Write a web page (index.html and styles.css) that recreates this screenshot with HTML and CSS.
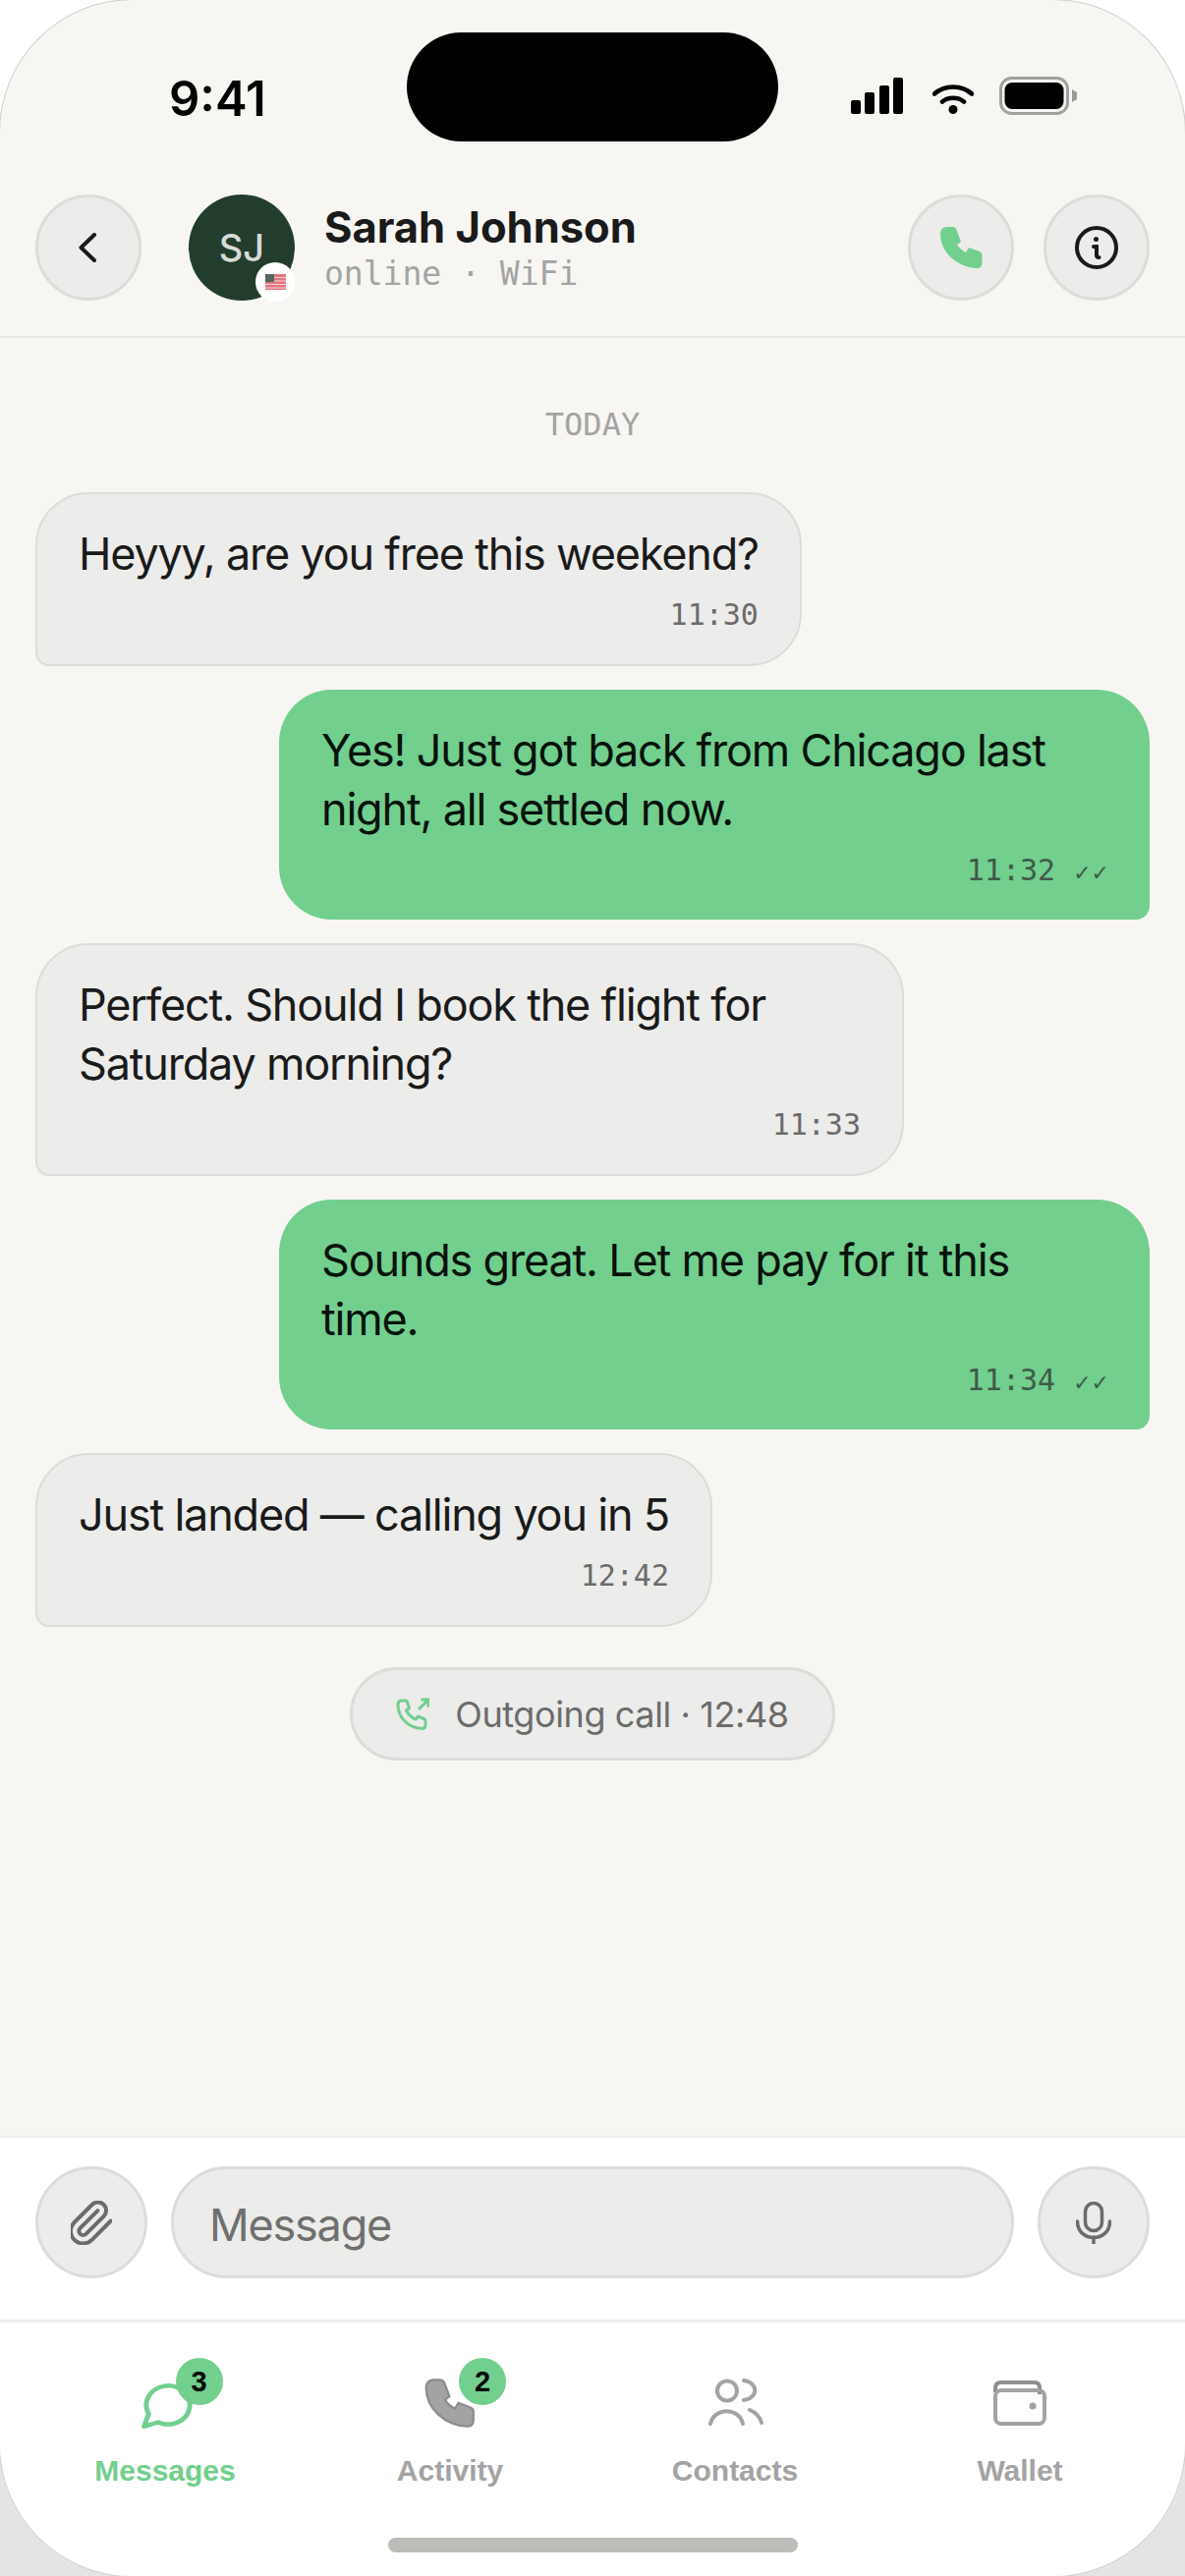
FILE: index.html
```html
<!DOCTYPE html>
<html lang="en">
<head>
    <meta charset="UTF-8">
    <meta name="viewport" content="width=device-width, initial-scale=1.0"/>
    <title>Chat</title>
    <link rel="stylesheet" href="styles.css">
</head>
<body>
    <div class="phone">
        <div class="island"></div>
        <div class="status">
            <span class="clock">9:41</span>
            <div class="status-icons">
                <svg class="ic-signal" viewBox="0 0 53 37"><rect x="0" y="23" width="10" height="14" rx="2"/><rect x="14" y="15" width="10" height="22" rx="2"/><rect x="29" y="8" width="10" height="29" rx="2"/><rect x="43" y="0" width="10" height="37" rx="2"/></svg>
                <svg class="ic-wifi" viewBox="0 0 42 32"><path d="M2 11.500C12 2 30 2 40 11.500M10 19.500C16 14.500 26 14.500 32 19.500" fill="none" stroke="#000" stroke-width="4.500" stroke-linecap="round"/><circle cx="21" cy="27.500" r="4.500"/></svg>
                <svg class="ic-battery" viewBox="0 0 80 39"><rect x="1.500" y="1.500" width="68" height="36" rx="11" fill="none" stroke="#a0a0a0" stroke-width="3"/><rect x="5.500" y="6" width="60" height="27" rx="7.500"/><path d="M74 13l5 3v7l-5 3z" fill="#999"/></svg>
            </div>
        </div>

        <div class="header">
            <button class="round"><svg class="ic-back" viewBox="0 0 18 30"><path d="M16 2L2.500 15L16 28" fill="none" stroke="#1a1a1a" stroke-width="4" stroke-linecap="round" stroke-linejoin="round"/></svg></button>
            <div class="avatar">
                SJ
                <span class="flag-badge"><svg class="ic-flag" viewBox="0 0 21 16"><rect width="21" height="16" fill="#e4747e"/><path d="M0 3.500H21M0 7H21M0 10.500H21M0 14H21" stroke="#f3d5d5" stroke-width="1.200"/><rect width="9" height="8" fill="#55685c"/></svg></span>
            </div>
            <div class="who">
                <div class="name">Sarah Johnson</div>
                <div class="presence">online · WiFi</div>
            </div>
            <button class="round"><svg class="ic-call" viewBox="0 0 43 42"><path class="handset" d="M0 7Q0 1 6 0L13 0Q15 0 16 2L21 15L17 18Q20 23 26 26L29 21L40 25Q42.500 26 42.500 29L42.500 37Q42 42 37 42C17 41 0 26 0 7Z"/></svg></button>
            <button class="round"><svg class="ic-info" viewBox="0 0 44 44"><circle cx="22" cy="22" r="20" fill="none" stroke="#1a1a1a" stroke-width="4"/><circle cx="21.500" cy="13.500" r="2.500" fill="#1a1a1a"/><path d="M19 21H22V30Q22 32 24.500 32" fill="none" stroke="#1a1a1a" stroke-width="4" stroke-linecap="round"/></svg></button>
        </div>

        <div class="messages">
            <div class="day">TODAY</div>

            <div class="bubble in">
                <div class="text">Heyyy, are you free this weekend?</div>
                <div class="meta">11:30</div>
            </div>
            <div class="bubble out">
                <div class="text">Yes! Just got back from Chicago last night, all settled now.</div>
                <div class="meta">11:32<span class="checks">✓✓</span></div>
            </div>
            <div class="bubble in">
                <div class="text">Perfect. Should I book the flight for Saturday morning?</div>
                <div class="meta">11:33</div>
            </div>
            <div class="bubble out">
                <div class="text">Sounds great. Let me pay for it this time.</div>
                <div class="meta">11:34<span class="checks">✓✓</span></div>
            </div>
            <div class="bubble in">
                <div class="text">Just landed — calling you in 5</div>
                <div class="meta">12:42</div>
            </div>

            <div class="call-pill">
                <svg class="ic-outgoing" viewBox="0 0 34 33"><path d="M2 7Q2 3 6 3L9.500 3Q11 3 11.500 4.500L13.500 10.500L10.500 13Q13.500 19 20 22L22.500 19L28.500 21.500Q30 22 30 24L30 28Q30 31.500 26.500 31.500C12 30.500 2 20 2 7Z" fill="none" stroke="#72cf8e" stroke-width="3" stroke-linejoin="round"/><path d="M23 12L33 2M25.500 2H33V9.500" fill="none" stroke="#72cf8e" stroke-width="3"/></svg>
                <span>Outgoing call · 12:48</span>
            </div>
        </div>

        <div class="composer">
            <button class="round big"><svg class="ic-clip" viewBox="2 1.500 20 21"><path d="M21.440 11.050l-9.190 9.190a6 6 0 0 1-8.490-8.490l8.570-8.570A4 4 0 1 1 18 8.840l-8.590 8.570a2 2 0 0 1-2.830-2.830l8.490-8.480" fill="none" stroke="#6b6b6b" stroke-width="1.900" stroke-linecap="round" stroke-linejoin="round"/></svg></button>
            <div class="input">Message</div>
            <button class="round big"><svg class="ic-mic" viewBox="0 0 36 43"><rect x="9.500" y="1.500" width="17" height="28" rx="8.500" fill="none" stroke="#6b6b6b" stroke-width="3.500"/><path d="M1.500 20C1.500 42 34.500 42 34.500 20M18 36V43" fill="none" stroke="#6b6b6b" stroke-width="3.500" stroke-linecap="round"/></svg></button>
        </div>

        <div class="tabs">
            <div class="tab active">
                <div class="tab-icon">
                    <svg class="ic-bubble" viewBox="1 1 22 22" preserveAspectRatio="none"><path d="M7.900 20A9 9 0 1 0 4 16.100L2 22Z" fill="none" stroke="#72cf8e" stroke-width="2" stroke-linejoin="round"/></svg>
                    <span class="count">3</span>
                </div>
                <div class="tab-label">Messages</div>
            </div>
            <div class="tab">
                <div class="tab-icon">
                    <svg class="ic-tabcall" viewBox="-1.500 -1.500 46 45"><path d="M0 7Q0 1 6 0L13 0Q15 0 16 2L21 15L17 18Q20 23 26 26L29 21L40 25Q42.500 26 42.500 29L42.500 37Q42 42 37 42C17 41 0 26 0 7Z" fill="#a3a3a3" stroke="#8c8c8c" stroke-width="2"/></svg>
                    <span class="count">2</span>
                </div>
                <div class="tab-label">Activity</div>
            </div>
            <div class="tab">
                <div class="tab-icon">
                    <svg class="ic-people" viewBox="0 0 57 48"><circle cx="20" cy="12.500" r="10" fill="none" stroke="#a3a3a3" stroke-width="4"/><path d="M3 46C7 29 32 29 36 46M37 2C52 4 52 20 37 22M43 32C48 34 53 38 55 45" fill="none" stroke="#a3a3a3" stroke-width="4" stroke-linecap="round"/></svg>
                </div>
                <div class="tab-label">Contacts</div>
            </div>
            <div class="tab">
                <div class="tab-icon">
                    <svg class="ic-wallet" viewBox="0 0 54 46"><path d="M2 12V8Q2 2 8 2H42Q47 2 47 8V14" fill="none" stroke="#8f8f8f" stroke-width="4"/><rect x="2" y="10" width="50" height="34" rx="6" fill="none" stroke="#a3a3a3" stroke-width="4"/><circle cx="40" cy="26" r="3.500" fill="#a3a3a3"/></svg>
                </div>
                <div class="tab-label">Wallet</div>
            </div>
        </div>
        <div class="home-bar"></div>
    </div>
</body>
</html>
```

FILE: styles.css
```css
* { box-sizing: border-box; }
html, body { margin: 0; padding: 0; }
body { width: 1206px; height: 2622px; background: linear-gradient(#ffffff 0%, #ffffff 10%, #e4e4e4 90%); font-family: 'Inter', Arial, sans-serif; color: #1a1a1a; overflow: hidden; }
svg { display: block; }
button { padding: 0; margin: 0; font: inherit; cursor: pointer; }

.phone { position: relative; width: 1206px; height: 2622px; background: #f7f6f2; border-radius: 135px; box-shadow: 0 0 0 1px #cfcfcf; overflow: hidden; display: flex; flex-direction: column; }
.island { position: absolute; left: 414px; top: 33px; width: 378px; height: 111px; border-radius: 56px; background: #000; }

.status { height: 198px; padding: 71px 109px 0 172px; display: flex; justify-content: space-between; align-items: flex-start; }
.clock { font-size: 49px; font-weight: 600; line-height: 60px; color: #000; }
.status-icons { display: flex; align-items: flex-end; gap: 28px; padding-top: 7px; }
.ic-signal { width: 53px; height: 37px; }
.ic-wifi { width: 42px; height: 32px; margin: 0 -2px 0 2px; }
.ic-battery { width: 80px; height: 39px; margin-bottom: -1px; }

.header { display: flex; align-items: center; gap: 30px; padding: 0 36px 36px; border-bottom: 2px solid #e6e6e3; }
.round { flex: none; width: 108px; height: 108px; border-radius: 50%; background: #ececea; border: 3px solid #dcdcda; display: flex; align-items: center; justify-content: center; }
.round.big { width: 114px; height: 114px; }
.ic-back { width: 18px; height: 30px; margin-left: -3px; }
.ic-call { width: 43px; height: 42px; fill: #72cf8e; }
.ic-info { width: 44px; height: 44px; }
.avatar { position: relative; flex: none; width: 108px; height: 108px; margin-left: 18px; border-radius: 50%; background: #233d2c; color: #d6dbd7; font-size: 38px; font-weight: 500; display: flex; align-items: center; justify-content: center; }
.flag-badge { position: absolute; left: 68px; top: 69px; width: 40px; height: 40px; border-radius: 50%; background: #fff; display: flex; align-items: center; justify-content: center; }
.ic-flag { width: 21px; height: 16px; }
.who { flex: 1; }
.name { font-size: 43.5px; font-weight: 700; line-height: 54px; color: #1a1a1a; }
.presence { font-family: 'DejaVu Sans Mono', monospace; font-size: 33px; line-height: 42px; color: #a3a3a3; }

.messages { flex: 1; padding: 68px 36px 0; display: flex; flex-direction: column; gap: 24px; }
.day { font-family: 'DejaVu Sans Mono', monospace; font-size: 32px; line-height: 40px; color: #a3a3a3; text-align: center; margin-bottom: 25px; }
.bubble { border-radius: 54px; }
.bubble.in { align-self: flex-start; max-width: 884px; padding: 31px 42px 30px; background: #ececea; border: 2px solid #dcdcda; border-bottom-left-radius: 14px; }
.bubble.out { align-self: flex-end; max-width: 886px; padding: 32px 44px 30px 43px; background: #72cf8e; border-bottom-right-radius: 14px; }
.text { font-size: 45px; line-height: 60px; letter-spacing: -1.2px; }
.bubble.out .text { color: #07120b; }
.meta { margin-top: 12px; font-family: 'DejaVu Sans Mono', monospace; font-size: 30px; line-height: 40px; text-align: right; color: #6b6b6b; }
.bubble.out .meta { color: #3f5a49; }
.checks { font-family: 'DejaVu Sans', sans-serif; font-size: 22px; line-height: 0; margin: 0 -3px 0 18px; }

.call-pill { align-self: center; margin-top: 17px; height: 95px; padding: 0 44px; display: flex; align-items: center; gap: 26px; border-radius: 48px; background: #ececea; border: 3px solid #dcdcda; font-size: 36px; letter-spacing: -0.4px; color: #6b6b6b; }
.ic-outgoing { width: 34px; height: 33px; }

.composer { padding: 29px 36px 42px; background: #fff; border-top: 2px solid #eeeeec; display: flex; align-items: center; gap: 24px; }
.input { flex: 1; height: 114px; padding: 4px 36px 0; border-radius: 57px; background: #ececea; border: 3px solid #dcdcda; display: flex; align-items: center; font-size: 45px; letter-spacing: -1.2px; color: #6f6f6f; }
.ic-clip { width: 42px; height: 45px; }
.ic-mic { width: 36px; height: 43px; }

.tabs { height: 261px; padding: 36px 23px 0; background: #fff; border-top: 3px solid #eeeeee; display: grid; grid-template-columns: repeat(4, 1fr); }
.tab { display: flex; flex-direction: column; align-items: center; }
.tab-icon { position: relative; height: 72px; display: flex; align-items: flex-end; }
.tab-label { margin-top: 23px; font-family: 'Liberation Sans', Arial, sans-serif; font-size: 30px; line-height: 40px; font-weight: 700; color: #a3a3a3; }
.tab.active .tab-label { color: #72cf8e; }
.count { position: absolute; left: 35px; top: 0; width: 48px; height: 48px; border-radius: 50%; background: #72cf8e; color: #000; font-family: 'Liberation Sans', Arial, sans-serif; font-size: 29px; font-weight: 700; display: flex; align-items: center; justify-content: center; }
.tab.active .count { left: 40px; }
.ic-bubble { width: 54px; height: 48px; margin-left: 5px; }
.ic-tabcall { width: 52px; height: 52px; }
.ic-people { width: 57px; height: 48px; margin-bottom: 3px; }
.ic-wallet { width: 54px; height: 46px; margin-bottom: 3px; }

.home-bar { position: absolute; left: 395px; top: 2583px; width: 417px; height: 15px; border-radius: 8px; background: #bbbdb9; }
```
